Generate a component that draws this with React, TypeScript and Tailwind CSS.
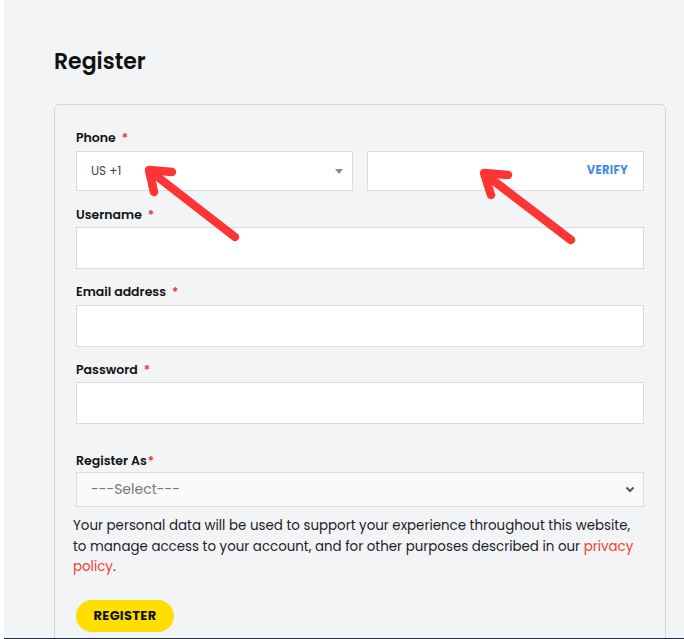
import React from "react";

const font = { fontFamily: '"Poppins", "Open Sans", "Noto Sans", sans-serif' };

function Label({ text, tight }: { text: string; tight?: boolean }) {
  return (
    <label className="block h-[18px] text-[12.5px] font-semibold leading-[20px] text-[#111]">
      {text}
      <span className={`${tight ? "ml-px" : "ml-[6px]"} text-[#f0313a]`}>*</span>
    </label>
  );
}

function TextInput() {
  return <input type="text" className="block h-[42px] w-full border border-[#dcdcdc] bg-white px-3 outline-none" />;
}

function Arrows() {
  return (
    <svg className="pointer-events-none absolute inset-0" width="684" height="639" viewBox="0 0 684 639">
      <g stroke="#ff3535" strokeWidth="8.5" strokeLinecap="round" strokeLinejoin="round" fill="none">
        <path d="M235 237 L150 171" />
        <path d="M172 172 L149 170 L154 192" />
        <path d="M571 240 L486 175" />
        <path d="M508 175 L484 173 L491 195" />
      </g>
    </svg>
  );
}

export default function App() {
  return (
    <div className="relative flex h-[639px] w-[684px] overflow-hidden bg-white" style={font}>
      <div className="w-[4px] shrink-0 bg-white" />
      <div className="flex flex-1 flex-col">
        <main className="h-[638px] overflow-hidden bg-[#f3f4f6] pl-[50px] pt-[46px]">
          <h1 className="h-[32px] text-[22px] font-semibold leading-[32px] text-[#111]">Register</h1>
          <div className="mt-[26px] w-[612px] rounded-[5px] border border-[#d6d3d8] px-[21px] pb-10 pt-[23px]">
            <Label text="Phone" />
            <div className="mt-[5px] flex gap-[14px]">
              <div className="relative flex h-[40px] w-[277px] items-center border border-[#dcdcdc] bg-white pl-[14px] text-[12px] text-[#444]">
                US +1
                <span className="absolute right-[9px] top-[17px] h-0 w-0 border-x-[4px] border-t-[5px] border-x-transparent border-t-[#888]" />
              </div>
              <div className="flex h-[40px] w-[277px] items-center justify-end border border-[#dcdcdc] bg-white pr-[15px]">
                <span className="text-[11.5px] font-bold tracking-wide text-[#3d8fe6]">VERIFY</span>
              </div>
            </div>

            <div className="mt-[14px]">
              <Label text="Username" />
              <div className="mt-[4px]">
                <TextInput />
              </div>
            </div>

            <div className="mt-[13px]">
              <Label text="Email address" />
              <div className="mt-[5px]">
                <TextInput />
              </div>
            </div>

            <div className="mt-[13px]">
              <Label text="Password" />
              <div className="mt-[4px]">
                <TextInput />
              </div>
            </div>

            <div className="mt-[27px]">
              <Label text="Register As" tight />
              <div className="relative mt-[3px] flex h-[35px] items-center border border-[#dcdcdc] bg-[#fafafa] pl-[14px] text-[14px] text-[#777]">
                ---Select---
                <svg className="absolute right-[8px] top-[13px]" width="10" height="7" viewBox="0 0 10 7">
                  <path d="M1.5 1.5 L5 5 L8.5 1.5" stroke="#555" strokeWidth="2" fill="none" />
                </svg>
              </div>
            </div>

            <p className="-ml-[3px] mt-[9px] w-[572px] text-[13.4px] leading-[20.5px] text-[#1c1c2a]">
              Your personal data will be used to support your experience throughout this website, to manage access to
              your account, and for other purposes described in our{" "}
              <a className="text-[#f2422c]">privacy policy</a>.
            </p>

            <button className="mt-[22px] h-[32px] w-[98px] rounded-full bg-[#ffde00] text-[13px] font-bold tracking-wide text-[#111]">
              REGISTER
            </button>
          </div>
        </main>
        <div className="h-px bg-[#1e2a3a]" />
      </div>
      <Arrows />
    </div>
  );
}
